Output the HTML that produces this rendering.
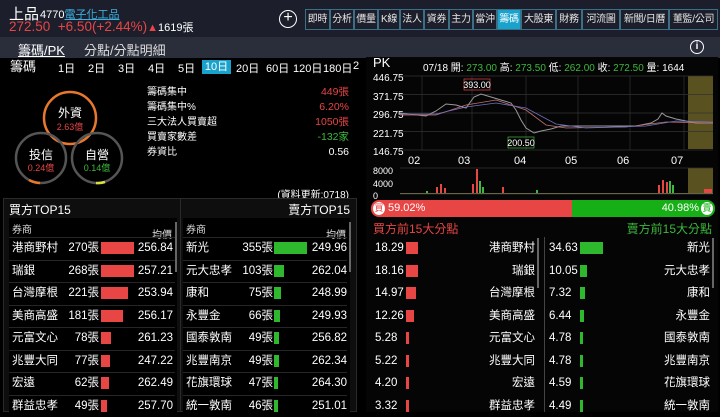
<!DOCTYPE html>
<html><head><meta charset="utf-8">
<style>
*{margin:0;padding:0;box-sizing:border-box}
body{width:720px;height:412px;background:#000;overflow:hidden;position:relative;font-family:"Liberation Sans","Noto Sans CJK TC",sans-serif;color:#ddd}
.a{position:absolute;white-space:nowrap}
.r{text-align:right}
.red{color:#e84545}.grn{color:#3cb83c}
.tab{position:absolute;top:9px;height:21px;border:1px solid #3a6f86;color:#e6e6e6;font-size:10px;line-height:19px;text-align:center;white-space:nowrap;overflow:hidden;letter-spacing:-0.3px}
.row{position:absolute;font-size:12px;height:22px;line-height:22px;border-top:1px solid #262626}
</style></head><body>
<div class="a" style="left:0;top:0;width:720px;height:37px;background:#1c1f2b"></div>
<div class="a" style="left:0;top:37px;width:720px;height:21px;background:#2a2e3b"></div>
<div class="a" style="left:9px;top:3px;font-size:15px;color:#fff">上品</div>
<div class="a" style="left:40px;top:6px;font-size:11px;color:#fff">4770<span style="color:#3ab0e0;text-decoration:underline">電子化工品</span></div>
<div class="a red" style="left:9px;top:19px;font-size:13.5px">272.50 &nbsp;+6.50(+2.44%)<span style="font-size:11px">▲</span><span style="color:#fff;font-size:11px">1619張</span></div>
<div class="a" style="left:279px;top:10px;width:18px;height:18px;border:1.5px solid #fff;border-radius:50%;color:#fff;font-size:16px;line-height:14px;text-align:center">+</div>
<div class="tab" style="left:305px;width:25px">即時</div>
<div class="tab" style="left:330px;width:24px">分析</div>
<div class="tab" style="left:354px;width:24px">價量</div>
<div class="tab" style="left:378px;width:22px">K線</div>
<div class="tab" style="left:400px;width:24px">法人</div>
<div class="tab" style="left:424px;width:25px">資券</div>
<div class="tab" style="left:449px;width:24px">主力</div>
<div class="tab" style="left:473px;width:24px">當沖</div>
<div class="tab" style="left:497px;width:24px;background:#19a3cc;color:#fff">籌碼</div>
<div class="tab" style="left:521px;width:35px">大股東</div>
<div class="tab" style="left:556px;width:26px">財務</div>
<div class="tab" style="left:582px;width:38px">河流圖</div>
<div class="tab" style="left:620px;width:49px">新聞/日曆</div>
<div class="tab" style="left:669px;width:49px">董監/公司</div>
<div class="a" style="left:18px;top:40px;font-size:13px;color:#fff;text-decoration:underline">籌碼/PK</div>
<div class="a" style="left:84px;top:40px;font-size:13px;color:#ddd">分點/分點明細</div>
<div class="a" style="left:690px;top:40px;width:14px;height:14px;border:1.5px solid #fff;border-radius:50%;color:#fff;font-size:10px;line-height:11px;text-align:center;font-weight:bold">i</div>

<div class="a" style="left:10px;top:56px;font-size:13px;color:#fff">籌碼</div>
<div class="a" style="left:58px;top:60px;font-size:11px;color:#fff">1日</div>
<div class="a" style="left:88px;top:60px;font-size:11px;color:#fff">2日</div>
<div class="a" style="left:118px;top:60px;font-size:11px;color:#fff">3日</div>
<div class="a" style="left:148px;top:60px;font-size:11px;color:#fff">4日</div>
<div class="a" style="left:178px;top:60px;font-size:11px;color:#fff">5日</div>
<div class="a" style="left:202px;top:60px;width:29px;height:14px;background:#19a3cc;font-size:11px;color:#fff;text-align:center;line-height:14px">10日</div>
<div class="a" style="left:236px;top:60px;font-size:11px;color:#fff">20日</div>
<div class="a" style="left:266px;top:60px;font-size:11px;color:#fff">60日</div>
<div class="a" style="left:293px;top:60px;font-size:11px;color:#fff">120日</div>
<div class="a" style="left:323px;top:60px;font-size:11px;color:#fff">180日</div>
<div class="a" style="left:353px;top:60px;font-size:11px;color:#fff">2</div>

<svg class="a" style="left:0;top:80px" width="140" height="112">
<circle cx="70" cy="38" r="26" fill="none" stroke="#e8782c" stroke-width="2.5"/>
<circle cx="41" cy="78" r="25" fill="none" stroke="#555" stroke-width="2.5"/>
<circle cx="97" cy="78" r="25" fill="none" stroke="#555" stroke-width="2.5"/>
<path d="M29 100 A25 25 0 0 0 40 103" fill="none" stroke="#e8782c" stroke-width="2.5"/>
<path d="M96 103 A25 25 0 0 0 105 102" fill="none" stroke="#d8e040" stroke-width="2.5"/>
<text x="70" y="37" fill="#fff" font-size="12" text-anchor="middle">外資</text>
<text x="70" y="50" fill="#e84545" font-size="9" text-anchor="middle">2.63億</text>
<text x="41" y="79" fill="#fff" font-size="12" text-anchor="middle">投信</text>
<text x="41" y="91" fill="#e84545" font-size="9" text-anchor="middle">0.24億</text>
<text x="97" y="79" fill="#fff" font-size="12" text-anchor="middle">自營</text>
<text x="97" y="91" fill="#3cb83c" font-size="9" text-anchor="middle">0.14億</text>
</svg>
<div class="a" style="left:147px;top:85px;font-size:10px;line-height:15px;color:#fff">籌碼集中<br>籌碼集中%<br>三大法人買賣超<br>買賣家數差<br>券資比</div>
<div class="a r" style="right:371px;top:85px;font-size:10.5px;line-height:15px"><span class="red">449張</span><br><span class="red">6.20%</span><br><span class="red">1050張</span><br><span class="grn">-132家</span><br><span style="color:#fff">0.56</span></div>
<div class="a" style="right:371px;top:186px;font-size:10px;color:#fff">(資料更新:0718)</div>

<div class="a" style="left:3px;top:198px;width:354px;height:214px;background:#0e0e0e;border:1px solid #2a2a2a"></div>
<div class="a" style="left:180px;top:198px;width:1px;height:214px;background:#2a2a2a"></div>
<div class="a" style="left:9px;top:201px;font-size:12px;color:#fff">買方TOP15</div>
<div class="a" style="right:370px;top:201px;font-size:12px;color:#fff">賣方TOP15</div>
<div class="a" style="left:9px;top:218px;width:168px;height:194px;background:#000"></div>
<div class="a" style="left:183px;top:218px;width:167px;height:194px;background:#000"></div>
<div class="a" style="left:12px;top:221px;font-size:10px;color:#ddd">券商</div>
<div class="a" style="left:152px;top:226px;font-size:10px;color:#ddd">均價</div>
<div class="a" style="left:186px;top:221px;font-size:10px;color:#ddd">券商</div>
<div class="a" style="left:326px;top:226px;font-size:10px;color:#ddd">均價</div>
<div class="a" style="left:175px;top:222px;width:2px;height:50px;background:#666"></div>
<div class="a" style="left:349px;top:222px;width:2px;height:50px;background:#666"></div>

<!-- right panel -->
<div class="a" style="left:366px;top:57px;width:352px;height:355px;background:#050505"></div>
<div class="a" style="left:373px;top:55px;font-size:13px;color:#fff">PK</div>
<div class="a" style="left:423px;top:59px;font-size:10px;color:#fff">07/18 開: <span class="grn">273.00</span> 高: <span class="grn">273.50</span> 低: <span class="grn">262.00</span> 收: <span class="grn">272.50</span> 量: 1644</div>
<div class="a" style="left:373px;top:70px;font-size:10px;line-height:18.6px;color:#fff">446.75<br>371.75<br>296.75<br>221.75<br>146.75</div>
<svg class="a" style="left:366px;top:70px" width="352" height="130">
<rect x="322" y="6" width="25" height="73" fill="#5a5120"/>
<rect x="322" y="98" width="25" height="26" fill="#5a5120"/>
<g stroke="#333" stroke-width="0.7">
<line x1="34" y1="6" x2="347" y2="6"/><line x1="34" y1="24.5" x2="347" y2="24.5"/><line x1="34" y1="43" x2="347" y2="43"/><line x1="34" y1="61.5" x2="347" y2="61.5"/><line x1="34" y1="80" x2="347" y2="80"/>
<line x1="56" y1="6" x2="56" y2="80"/><line x1="106" y1="6" x2="106" y2="80"/><line x1="160" y1="6" x2="160" y2="80"/><line x1="212" y1="6" x2="212" y2="80"/><line x1="264" y1="6" x2="264" y2="80"/><line x1="318" y1="6" x2="318" y2="80"/>
<line x1="34" y1="98" x2="347" y2="98"/><line x1="34" y1="124" x2="347" y2="124"/>
</g>
<polyline fill="none" stroke="#999" stroke-width="1" points="34,43 60,46 70,41 80,34 90,35 100,38 108,27 115,24 125,27 135,30 145,33 150,40 155,50 160,58 168,63 175,61 185,59 195,56 230,56 270,56 285,53 292,49 296,43 300,46 310,49 330,53 347,53"/>
<polyline fill="none" stroke="#c07070" stroke-width="0.8" points="34,45 70,45 100,35 130,30 160,40 180,55 200,58 260,57 300,52 347,53"/>
<polyline fill="none" stroke="#7070c0" stroke-width="0.8" points="34,44 70,44 100,37 130,33 160,38 190,54 220,58 280,56 310,51 347,52"/>
<rect x="98" y="9" width="26" height="11" fill="none" stroke="#e84545" stroke-width="0.7"/>
<text x="111" y="18" fill="#fff" font-size="9" text-anchor="middle">393.00</text>
<rect x="142" y="67" width="26" height="11" fill="none" stroke="#3cb83c" stroke-width="0.7"/>
<text x="155" y="76" fill="#fff" font-size="9" text-anchor="middle">200.50</text>
<g fill="#fff" font-size="11"><text x="42" y="94">02</text><text x="92" y="94">03</text><text x="148" y="94">04</text><text x="199" y="94">05</text><text x="251" y="94">06</text><text x="305" y="94">07</text></g>
<g fill="#fff" font-size="9"><text x="7" y="104">8000</text><text x="7" y="117">4000</text><text x="7" y="129">0</text></g>
<g fill="#e84545"><rect x="70" y="117" width="2" height="7"/><rect x="74" y="114" width="2" height="10"/><rect x="78" y="118" width="2" height="6"/><rect x="110" y="99" width="2" height="25"/><rect x="106" y="114" width="2" height="10"/><rect x="136" y="117" width="2" height="7"/><rect x="296" y="110" width="2" height="14"/><rect x="300" y="112" width="2" height="12"/><rect x="292" y="115" width="2" height="9"/><rect x="338" y="119" width="8" height="5"/></g>
<g fill="#3cb83c"><rect x="113" y="111" width="2" height="13"/><rect x="116" y="117" width="2" height="7"/><rect x="303" y="111" width="2" height="13"/><rect x="306" y="115" width="2" height="9"/><rect x="170" y="120" width="2" height="4"/><rect x="60" y="121" width="2" height="3"/></g>
<rect x="34" y="123" width="313" height="1" fill="#664"/>
</svg>
<div class="a" style="left:371px;top:200px;width:201px;height:17px;background:#e84545;border-radius:8px 0 0 8px"></div>
<div class="a" style="left:572px;top:200px;width:143px;height:17px;background:#16b016;border-radius:0 8px 8px 0"></div>
<div class="a" style="left:373px;top:202px;width:12px;height:13px;background:#fff;border-radius:50%;color:#e84545;font-size:9px;line-height:13px;text-align:center">買</div>
<div class="a" style="left:701px;top:202px;width:12px;height:13px;background:#fff;border-radius:50%;color:#16b016;font-size:9px;line-height:13px;text-align:center">賣</div>
<div class="a" style="left:388px;top:202px;font-size:11px;color:#fff">59.02%</div>
<div class="a" style="right:21px;top:202px;font-size:11px;color:#fff">40.98%</div>
<div class="a red" style="left:373px;top:220px;font-size:12px">買方前15大分點</div>
<div class="a grn" style="right:8px;top:220px;font-size:12px">賣方前15大分點</div>
<div class="a" style="left:544px;top:237px;width:1px;height:175px;background:#444"></div>
<div class="a" style="left:537px;top:238px;width:2px;height:50px;background:#666"></div>
<div class="a" style="left:712px;top:238px;width:2px;height:50px;background:#666"></div>
<div id="lt"></div>
<script>
var b=[["港商野村",270,"256.84"],["瑞銀",268,"257.21"],["台灣摩根",221,"253.94"],["美商高盛",181,"256.17"],["元富文心",78,"261.23"],["兆豐大同",77,"247.22"],["宏遠",62,"262.49"],["群益忠孝",49,"257.70"]];
var s=[["新光",355,"249.96"],["元大忠孝",103,"262.04"],["康和",75,"248.99"],["永豐金",66,"249.93"],["國泰敦南",49,"256.82"],["兆豐南京",49,"262.34"],["花旗環球",47,"264.30"],["統一敦南",46,"251.01"]];
var bp=["18.29","18.16","14.97","12.26","5.28","5.22","4.20","3.32"],sp=["34.63","10.05","7.32","6.44","4.78","4.78","4.59","4.49"];
var h="";
function t(x,y,txt,right){return '<div class="a'+(right?' r':'')+'" style="'+(right?'right:'+x:'left:'+x)+'px;top:'+(y+4)+'px;font-size:11.5px;line-height:14px;color:#fff">'+txt+'</div>';}
for(var i=0;i<8;i++){var y=237+i*22.5;
h+='<div class="row" style="left:9px;top:'+y+'px;width:166px"></div>';
h+='<div class="row" style="left:183px;top:'+y+'px;width:164px"></div>';
h+=t(12,y,b[i][0]);h+=t(621,y,b[i][1]+'張',1);
h+='<div class="a" style="left:101px;top:'+(y+5)+'px;width:'+Math.max(3,b[i][1]/270*33)+'px;height:12px;background:#e84545"></div>';
h+=t(547,y,b[i][2],1);
h+=t(186,y,s[i][0]);h+=t(447,y,s[i][1]+'張',1);
h+='<div class="a" style="left:274px;top:'+(y+5)+'px;width:'+Math.max(3,s[i][1]/355*33)+'px;height:12px;background:#2eb82e"></div>';
h+=t(373,y,s[i][2],1);
h+=t(375,y,bp[i]);
h+='<div class="a" style="left:406px;top:'+(y+5)+'px;width:'+Math.max(3,bp[i]/18.29*12)+'px;height:12px;background:#e84545"></div>';
h+=t(185,y,b[i][0],1);
h+=t(549,y,sp[i]);
h+='<div class="a" style="left:580px;top:'+(y+5)+'px;width:'+Math.max(3,sp[i]/34.63*23)+'px;height:12px;background:#2eb82e"></div>';
h+=t(10,y,s[i][0],1);
}
document.getElementById("lt").innerHTML=h;
</script>
</body></html>
